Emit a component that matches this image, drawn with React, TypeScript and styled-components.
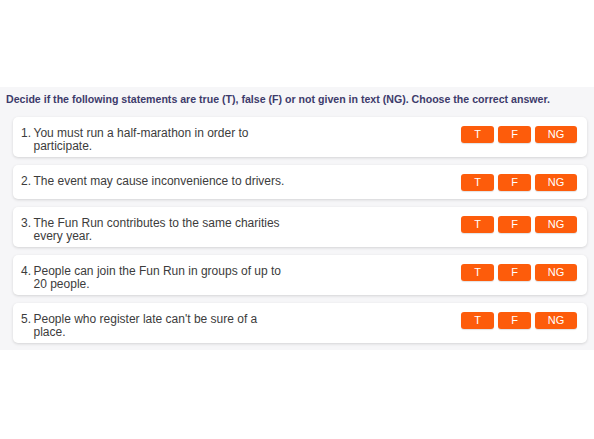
import React from "react";
import styled, { createGlobalStyle } from "styled-components";

const GlobalStyle = createGlobalStyle`
  html, body {
    margin: 0;
    padding: 0;
    background: #ffffff;
    font-family: "Liberation Sans", Arial, sans-serif;
  }
`;

const statements = [
  "You must run a half-marathon in order to participate.",
  "The event may cause inconvenience to drivers.",
  "The Fun Run contributes to the same charities every year.",
  "People can join the Fun Run in groups of up to 20 people.",
  "People who register late can't be sure of a place.",
];

const answers = ["T", "F", "NG"];

const Page = styled.div`
  width: 594px;
  height: 439px;
  padding-top: 87px;
  box-sizing: border-box;
`;

const Panel = styled.div`
  background: #f6f6f8;
  padding: 6px 7px 7px 6px;
`;

const Heading = styled.div`
  font-size: 10.6px;
  font-weight: bold;
  color: #3d3b6b;
  line-height: 13px;
  margin-bottom: 11px;
  white-space: nowrap;
`;

const List = styled.div`
  display: flex;
  flex-direction: column;
  gap: 8px;
  padding-left: 7px;
`;

const Card = styled.div`
  display: flex;
  justify-content: space-between;
  align-items: flex-start;
  background: #ffffff;
  border-radius: 5px;
  box-shadow: 0 1px 3px rgba(0, 0, 0, 0.14);
  padding: 9px 10px 4px 8px;
`;

const Statement = styled.div`
  display: flex;
  padding-top: 1px;
  font-size: 12px;
  line-height: 13px;
  color: #3c3c3c;
`;

const Num = styled.span`
  flex: none;
  width: 12.5px;
`;

const Text = styled.span`
  width: 252px;
`;

const Buttons = styled.div`
  display: flex;
  gap: 4px;
  margin-bottom: 4px;
`;

const Answer = styled.button<{ $wide?: boolean }>`
  width: ${(p) => (p.$wide ? "42px" : "33px")};
  height: 17px;
  padding: 0;
  border: none;
  border-radius: 3px;
  background: #fd5c0b;
  color: #ffffff;
  font-family: "Liberation Sans", Arial, sans-serif;
  font-size: 11px;
  line-height: 17px;
  cursor: pointer;
  box-shadow: 0 1px 1px rgba(0, 0, 0, 0.12);
`;

export default function App() {
  return (
    <>
      <GlobalStyle />
      <Page>
        <Panel>
          <Heading>
            Decide if the following statements are true (T), false (F) or not
            given in text (NG). Choose the correct answer.
          </Heading>
          <List>
            {statements.map((s, i) => (
              <Card key={i}>
                <Statement>
                  <Num>{i + 1}.</Num>
                  <Text>{s}</Text>
                </Statement>
                <Buttons>
                  {answers.map((a) => (
                    <Answer key={a} $wide={a === "NG"}>
                      {a}
                    </Answer>
                  ))}
                </Buttons>
              </Card>
            ))}
          </List>
        </Panel>
      </Page>
    </>
  );
}
